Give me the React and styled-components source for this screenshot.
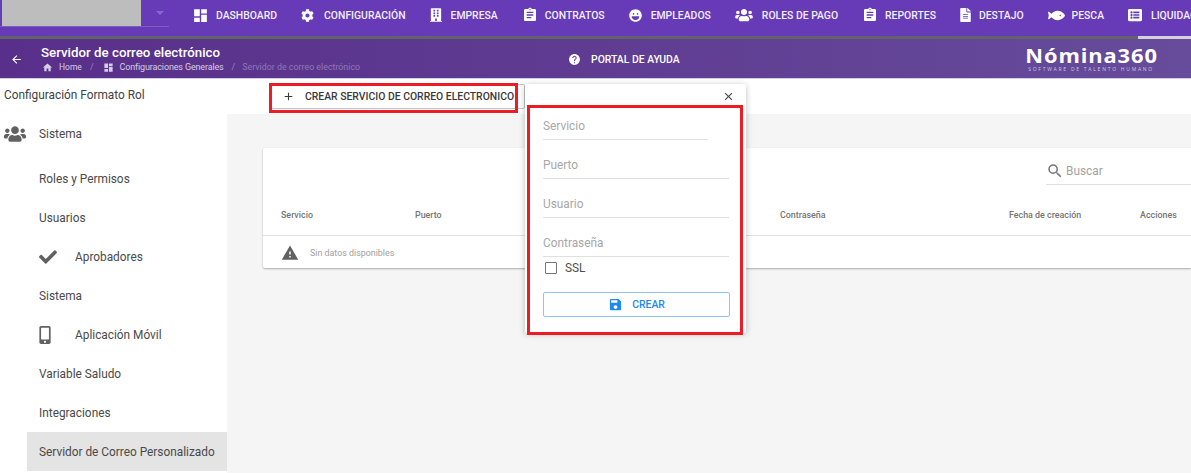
import React from 'react';
import styled, { createGlobalStyle } from 'styled-components';
import {
  FaBuilding,
  FaCheck,
  FaCog,
  FaFileAlt,
  FaFish,
  FaLaugh,
  FaListAlt,
  FaMobileAlt,
  FaUsers,
} from 'react-icons/fa';
import {
  MdAdd,
  MdArrowBack,
  MdAssignment,
  MdClose,
  MdDashboard,
  MdHelp,
  MdHome,
  MdSave,
  MdSearch,
  MdWarning,
} from 'react-icons/md';

const GlobalStyle = createGlobalStyle`
  html, body {
    margin: 0;
    height: 100%;
    overflow: hidden;
    background: #fff;
    font-family: Roboto, "Liberation Sans", sans-serif;
  }
  #root {
    height: 100%;
  }
`;

const Page = styled('div')`
  display: flex;
  flex-direction: column;
  height: 473px;
  overflow: hidden;
`;

const TopNav = styled('nav')`
  display: flex;
  align-items: stretch;
  height: 39px;
  padding-bottom: 6px;
  box-sizing: border-box;
  background-color: #673ab7;
  border-bottom: 3px solid #62626a;
  position: relative;
  white-space: nowrap;
`;

const TenantBox = styled('div')`
  flex-shrink: 0;
  align-self: flex-start;
  display: flex;
  justify-content: space-between;
  width: 169px;
  height: 27px;
  margin-right: 11px;
  padding-left: 2px;
  box-sizing: border-box;
  border-bottom: 1px solid #7e5cc0;
`;

const TenantBlock = styled('div')`
  width: 139px;
  background-color: #bdbdbd;
`;

const TenantCaret = styled('span')`
  width: 0;
  height: 0;
  margin: 11px 5px 0 0;
  border-left: 4px solid transparent;
  border-right: 4px solid transparent;
  border-top: 4px solid #8a68cb;
`;

const NavItem = styled('a')`
  display: flex;
  align-items: center;
  gap: ${(p) => p.$gap}px;
  padding: 0 12px;
  color: #f3effa;
  font-size: 10.4px;
  font-weight: 500;
  flex-shrink: 0;

  svg {
    flex-shrink: 0;
    width: ${(p) => p.$w}px;
    height: ${(p) => p.$h}px;
    color: #fff;
  }
`;

const ActiveMark = styled('span')`
  position: absolute;
  right: 0;
  bottom: -3px;
  width: 53px;
  height: 3px;
  background-color: #d4d0dc;
`;

const SubBar = styled('header')`
  display: grid;
  grid-template-columns: 558px 1fr auto;
  align-items: center;
  height: 40px;
  padding-left: 10px;
  padding-right: 33px;
  box-sizing: border-box;
  color: #fff;
  background: linear-gradient(90deg, #582f8a 0%, #5f3c92 50%, #664c9b 100%);
  border-bottom: 1px solid #d5d0df;
`;

const TitleBlock = styled('div')`
  display: flex;
  align-items: center;
  gap: 18px;

  > svg {
    font-size: 13px;
    margin-top: 1px;
  }
`;

const PageTitle = styled('div')`
  font-size: 13.3px;
  font-weight: 500;
  line-height: 15px;
`;

const Crumbs = styled('div')`
  display: flex;
  align-items: center;
  gap: 6px;
  margin-top: 2px;
  margin-left: 1px;
  line-height: 11px;
  color: #d6cde6;
  white-space: nowrap;

  svg {
    font-size: 11px;
    color: #d6cde6;
  }
`;

const Crumb = styled('span')`
  font-size: ${(p) => p.$size}px;
  letter-spacing: ${(p) => p.$spacing || 0}px;
  color: ${(p) => p.$color || '#d6cde6'};
`;

const CrumbSep = styled('span')`
  font-size: 9px;
  margin: 0 ${(p) => p.$right}px 0 2px;
  color: #9a84bd;
`;

const HelpLink = styled('div')`
  display: flex;
  align-items: center;
  gap: 10px;
  font-size: 10.4px;
  font-weight: 500;
  margin-top: 1px;

  svg {
    font-size: 13px;
  }
`;

const Logo = styled('div')`
  text-align: right;
`;

const LogoName = styled('div')`
  font-family: "Open Sans", sans-serif;
  font-size: 19.5px;
  font-weight: 700;
  line-height: 20px;
  letter-spacing: 0.8px;
  transform: scaleX(1.12);
  transform-origin: right center;
`;

const LogoTag = styled('div')`
  font-family: "Open Sans", sans-serif;
  font-size: 5px;
  line-height: 6px;
  letter-spacing: 1.75px;
  margin-right: 4px;
  color: #cfc6e0;
`;

const Body = styled('div')`
  display: grid;
  grid-template-columns: 227px 1fr;
  flex: 1;
  min-height: 0;
`;

const Sidebar = styled('aside')`
  background-color: #fff;
  color: #4a4a4a;
  font-size: 11.85px;
`;

const SidebarTitle = styled('div')`
  height: 35px;
  padding: 0 0 4px 4px;
  box-sizing: border-box;
  display: flex;
  align-items: center;
  color: #424242;
`;

const GroupRow = styled('div')`
  display: flex;
  align-items: center;
  height: 39px;
  padding-left: 4px;
  margin-bottom: 6px;
  gap: 13px;

  svg {
    width: 22px;
    height: 18px;
    color: #616161;
  }
`;

const MenuList = styled('ul')`
  list-style: none;
  margin: 0 0 0 27px;
  padding: 0;
`;

const MenuItem = styled('li')`
  display: flex;
  align-items: center;
  height: 39px;
  padding-left: 12px;
  background-color: ${(p) => (p.$active ? '#e4e4e4' : 'transparent')};
`;

const MenuIcon = styled('span')`
  display: flex;
  width: 36px;
  color: #616161;

  svg {
    width: ${(p) => p.$w}px;
    height: ${(p) => p.$h}px;
  }
`;

const Main = styled('main')`
  display: flex;
  flex-direction: column;
  min-width: 0;
`;

const ActionStrip = styled('div')`
  height: 35px;
  padding: 5px 0 0 44px;
  box-sizing: border-box;
  background-color: #fff;
  position: relative;
  z-index: 2;
`;

const AddWrap = styled('div')`
  position: relative;
  width: 254px;
`;

const AddButton = styled('button')`
  display: flex;
  align-items: center;
  gap: 10px;
  width: 254px;
  height: 25px;
  padding: 0 0 0 10px;
  box-sizing: border-box;
  background: #fff;
  border: 1px solid #c4c4c4;
  border-radius: 2px;
  color: #3a3a3a;
  font-family: inherit;
  font-size: 10.4px;
  font-weight: 500;
  white-space: nowrap;

  svg {
    font-size: 13px;
    flex-shrink: 0;
  }
`;

const RedMark = styled('span')`
  position: absolute;
  left: -2px;
  top: -1px;
  width: 249px;
  height: 30px;
  box-sizing: border-box;
  border: 3px solid #ed1c24;
  pointer-events: none;
`;

const Popover = styled('div')`
  position: absolute;
  left: 254px;
  top: 0;
  width: 221px;
  height: 249px;
  padding: 0 17px 0 18px;
  box-sizing: border-box;
  background-color: #fff;
  border-radius: 2px;
  box-shadow: 0 1px 6px rgba(0, 0, 0, 0.25);
`;

const CloseRow = styled('div')`
  display: flex;
  justify-content: flex-end;
  height: 22px;
  padding-top: 6px;
  box-sizing: border-box;
  margin-right: -6px;
  color: #424242;
  font-size: 13px;
`;

const FormFrame = styled('span')`
  position: absolute;
  left: 2px;
  top: 21px;
  width: 216px;
  height: 230px;
  box-sizing: border-box;
  border: 3px solid #ed1c24;
  pointer-events: none;
`;

const Field = styled('div')`
  width: ${(p) => p.$width || 186}px;
  height: 39px;
  box-sizing: border-box;
  border-bottom: 1px solid #e0e0e0;
  display: flex;
  align-items: flex-end;
  padding-bottom: 6px;
  color: #a8a8a8;
  font-size: 11.85px;
  line-height: 14px;
`;

const FirstField = styled(Field)`
  height: 34px;
`;

const CheckRow = styled('label')`
  display: flex;
  align-items: center;
  gap: 8px;
  height: 22px;
  padding-left: 2px;
  color: #4f4f4f;
  font-size: 11.85px;
`;

const CheckBox = styled('span')`
  width: 12px;
  height: 12px;
  box-sizing: border-box;
  border: 1.5px solid #767676;
  border-radius: 1px;
`;

const CreateButton = styled('button')`
  display: flex;
  align-items: center;
  justify-content: center;
  gap: 9px;
  width: 187px;
  height: 25px;
  margin-top: 13px;
  padding: 0;
  background: #fff;
  border: 1px solid #90c4f5;
  border-radius: 2px;
  color: #2089ee;
  font-family: inherit;
  font-size: 10.4px;
  font-weight: 500;

  svg {
    font-size: 15px;
  }
`;

const Content = styled('div')`
  flex: 1;
  padding: 34px 0 0 36px;
  background-color: #f5f5f5;
`;

const Card = styled('section')`
  height: 120px;
  background-color: #fff;
  border-radius: 2px 0 0 2px;
  box-shadow: 0 1px 2px rgba(0, 0, 0, 0.3);
`;

const Toolbar = styled('div')`
  display: flex;
  justify-content: flex-end;
  height: 50px;
  padding-top: 6px;
  box-sizing: border-box;
`;

const SearchBox = styled('div')`
  display: flex;
  align-items: center;
  gap: 2px;
  width: 145px;
  height: 31px;
  padding-top: 3px;
  box-sizing: border-box;
  border-bottom: 1px solid #e0e0e0;
  color: #a3a3a3;
  font-size: 11.85px;

  svg {
    font-size: 18px;
    color: #757575;
  }
`;

const HeadRow = styled('div')`
  display: grid;
  grid-template-columns: 134px 182px 183px 229px 131px 1fr;
  align-items: center;
  height: 38px;
  padding: 0 0 4px 18px;
  box-sizing: border-box;
  border-bottom: 1px solid #e0e0e0;
  color: #757575;
  font-size: 8.9px;
  font-weight: 500;
`;

const EmptyRow = styled('div')`
  display: flex;
  align-items: center;
  gap: 11px;
  height: 32px;
  padding: 1px 0 0 18px;
  box-sizing: border-box;
  color: #a0a0a0;
  font-size: 8.9px;

  svg {
    font-size: 18px;
    color: #616161;
  }
`;

const navItems = [
  { label: 'DASHBOARD', Icon: MdDashboard, w: 17, h: 17, gap: 7 },
  { label: 'CONFIGURACIÓN', Icon: FaCog, w: 13, h: 13, gap: 10 },
  { label: 'EMPRESA', Icon: FaBuilding, w: 12, h: 14, gap: 9 },
  { label: 'CONTRATOS', Icon: MdAssignment, w: 16, h: 16, gap: 7 },
  { label: 'EMPLEADOS', Icon: FaLaugh, w: 13, h: 13, gap: 9 },
  { label: 'ROLES DE PAGO', Icon: FaUsers, w: 18, h: 14, gap: 9 },
  { label: 'REPORTES', Icon: MdAssignment, w: 16, h: 16, gap: 7 },
  { label: 'DESTAJO', Icon: FaFileAlt, w: 11, h: 14, gap: 8 },
  { label: 'PESCA', Icon: FaFish, w: 17, h: 15, gap: 7 },
  { label: 'LIQUIDACIÓN', Icon: FaListAlt, w: 14, h: 14, gap: 9 },
];

const menuItems = [
  { label: 'Roles y Permisos' },
  { label: 'Usuarios' },
  { label: 'Aprobadores', Icon: FaCheck, w: 18, h: 18 },
  { label: 'Sistema' },
  { label: 'Aplicación Móvil', Icon: FaMobileAlt, w: 12, h: 18 },
  { label: 'Variable Saludo' },
  { label: 'Integraciones' },
  { label: 'Servidor de Correo Personalizado', active: true },
];

const columns = ['Servicio', 'Puerto', 'Usuario', 'Contraseña', 'Fecha de creación', 'Acciones'];

export default function App() {
  return (
    <Page>
      <GlobalStyle />
      <TopNav>
        <TenantBox>
          <TenantBlock />
          <TenantCaret />
        </TenantBox>
        {navItems.map(({ label, Icon, w, h, gap }) => (
          <NavItem key={label} $w={w} $h={h} $gap={gap}>
            <Icon />
            {label}
          </NavItem>
        ))}
        <ActiveMark />
      </TopNav>

      <SubBar>
        <TitleBlock>
          <MdArrowBack />
          <div>
            <PageTitle>Servidor de correo electrónico</PageTitle>
            <Crumbs>
              <MdHome />
              <Crumb $size={8.5}>Home</Crumb>
              <CrumbSep $right={3}>/</CrumbSep>
              <MdDashboard />
              <Crumb $size={9} $spacing={-0.15}>Configuraciones Generales</Crumb>
              <CrumbSep $right={1}>/</CrumbSep>
              <Crumb $size={8.85} $color="#8e78b4">Servidor de correo electrónico</Crumb>
            </Crumbs>
          </div>
        </TitleBlock>
        <HelpLink>
          <MdHelp />
          PORTAL DE AYUDA
        </HelpLink>
        <Logo>
          <LogoName>Nómina360</LogoName>
          <LogoTag>SOFTWARE DE TALENTO HUMANO</LogoTag>
        </Logo>
      </SubBar>

      <Body>
        <Sidebar>
          <SidebarTitle>Configuración Formato Rol</SidebarTitle>
          <GroupRow>
            <FaUsers />
            Sistema
          </GroupRow>
          <MenuList>
            {menuItems.map(({ label, Icon, w, h, active }) => (
              <MenuItem key={label} $active={active}>
                {Icon && (
                  <MenuIcon $w={w} $h={h}>
                    <Icon />
                  </MenuIcon>
                )}
                {label}
              </MenuItem>
            ))}
          </MenuList>
        </Sidebar>

        <Main>
          <ActionStrip>
            <AddWrap>
              <AddButton>
                <MdAdd />
                CREAR SERVICIO DE CORREO ELECTRONICO
              </AddButton>
              <RedMark />
              <Popover>
                <CloseRow>
                  <MdClose />
                </CloseRow>
                <FirstField $width={165}>Servicio</FirstField>
                <Field>Puerto</Field>
                <Field>Usuario</Field>
                <Field>Contraseña</Field>
                <CheckRow>
                  <CheckBox />
                  SSL
                </CheckRow>
                <CreateButton>
                  <MdSave />
                  CREAR
                </CreateButton>
                <FormFrame />
              </Popover>
            </AddWrap>
          </ActionStrip>
          <Content>
            <Card>
              <Toolbar>
                <SearchBox>
                  <MdSearch />
                  Buscar
                </SearchBox>
              </Toolbar>
              <HeadRow>
                {columns.map((c) => (
                  <span key={c}>{c}</span>
                ))}
              </HeadRow>
              <EmptyRow>
                <MdWarning />
                Sin datos disponibles
              </EmptyRow>
            </Card>
          </Content>
        </Main>
      </Body>
    </Page>
  );
}
